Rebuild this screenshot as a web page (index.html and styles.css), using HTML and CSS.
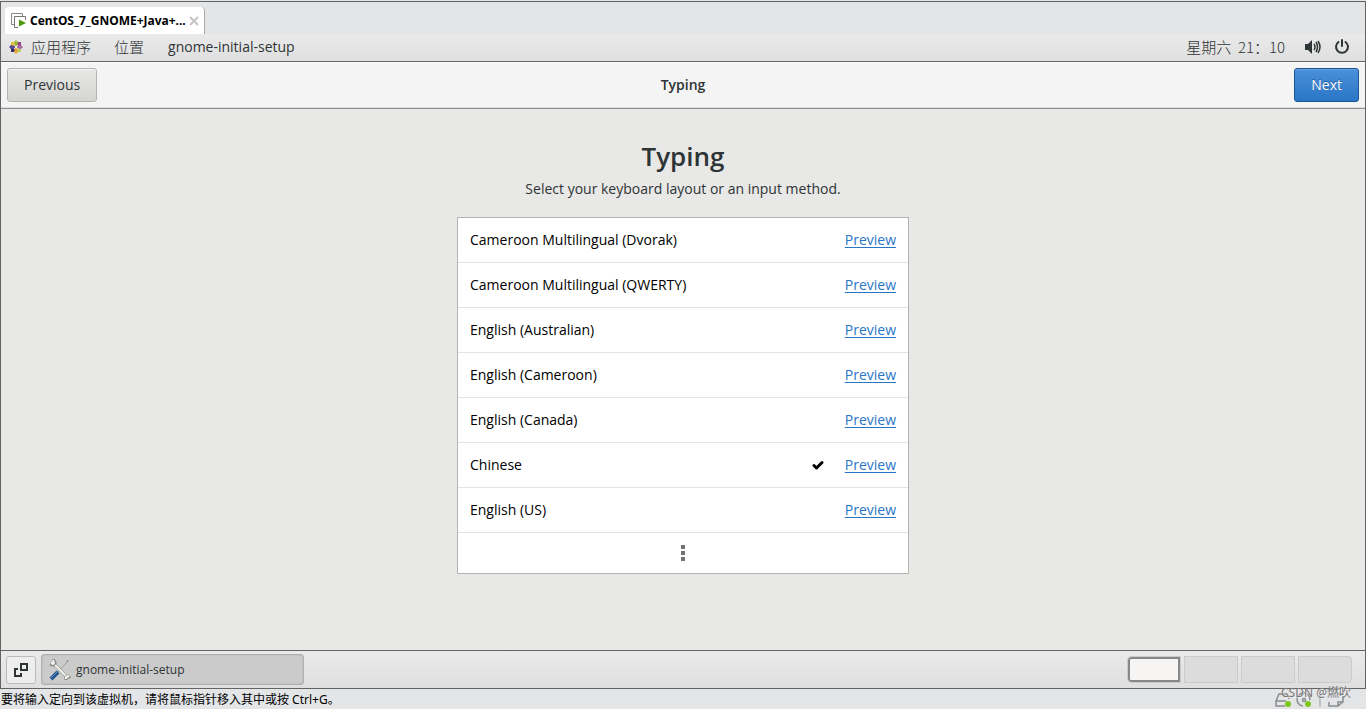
FILE: index.html
```
<!DOCTYPE html>
<html lang="en">
<head>
<meta charset="utf-8">
<title>Typing</title>
<link rel="stylesheet" href="styles.css">
</head>
<body>
<div class="screen">
  <div class="tabs">
    <div class="tab">
      <svg class="tab-icon" width="16" height="16" viewBox="0 0 16 16" fill="none"><path d="M11.500 3V.5H.5v11H3" stroke="#888"/><path d="M14.500 7V3.500H3.500v11H7" stroke="#777"/><path d="M8 6.500v7l7-3.500z" fill="#4a9a0c"/></svg>
      <span class="tab-title">CentOS_7_GNOME+Java+...</span>
      <button class="tab-close" aria-label="Close tab"><svg width="10" height="10" viewBox="0 0 10 10"><path d="M1 1l8 8M9 1L1 9" stroke="#c4c4c4" stroke-width="2"/></svg></button>
    </div>
  </div>
  <nav class="panel">
    <button class="menu menu-apps"><svg width="14" height="14" viewBox="0 0 14 14">
      <path d="M7 0l2 2v4H5V2z" fill="#9dbb3b"/><path d="M14 7l-2 2H8V5h4z" fill="#a66ba0"/><path d="M7 14l-2-2V8h4v4z" fill="#e8a33a"/><path d="M0 7l2-2h4v4H2z" fill="#5a4a91"/>
      <path d="M2 2h3l1 4-4-1z" fill="#e5c33c"/><path d="M12 2v3l-4 1 1-4z" fill="#963f87"/><path d="M12 12H9L8 8l4 1z" fill="#b9cd62"/><path d="M2 12V9l4-1-1 4z" fill="#393169"/><path d="M5 5l4 4M9 5L5 9" stroke="#f5f1ee"/></svg>应用程序</button>
    <button class="menu menu-places">位置</button>
    <button class="menu">gnome-initial-setup</button>
    <div class="tray">
      <span class="clock">星期六&nbsp; 21：10</span>
      <button class="tray-button" aria-label="Volume"><svg width="16" height="16" viewBox="0 0 16 16"><path d="M0 5h3l4-4v14l-4-4H0z" fill="#2e3436"/><path d="M9 5q2 3 0 6M11 3q3 5 0 10M13 2q4 6 0 12" fill="none" stroke="#2e3436" stroke-width="1.500"/></svg></button>
      <button class="tray-button" aria-label="Power"><svg width="16" height="16" viewBox="0 0 16 16" fill="none" stroke="#2e3436" stroke-width="2" stroke-linecap="round"><path d="M4.500 3a6 6 0 1 0 7 0M8 1v6"/></svg></button>
    </div>
  </nav>
  <header class="header">
    <button class="button">Previous</button>
    <div class="header-title">Typing</div>
    <button class="button button-next">Next</button>
  </header>
  <main class="content">
    <h1 class="title">Typing</h1>
    <p class="subtitle">Select your keyboard layout or an input method.</p>
    <ul class="list">
      <li class="row"><span class="name">Cameroon Multilingual (Dvorak)</span><a class="preview" href="#">Preview</a></li>
      <li class="row"><span class="name">Cameroon Multilingual (QWERTY)</span><a class="preview" href="#">Preview</a></li>
      <li class="row"><span class="name">English (Australian)</span><a class="preview" href="#">Preview</a></li>
      <li class="row"><span class="name">English (Cameroon)</span><a class="preview" href="#">Preview</a></li>
      <li class="row"><span class="name">English (Canada)</span><a class="preview" href="#">Preview</a></li>
      <li class="row"><span class="name">Chinese</span><svg width="12" height="10" viewBox="0 0 12 10"><path d="M2 5.500l2.500 2.500 5.500-5.500" fill="none" stroke="#000" stroke-width="3" stroke-linejoin="round" stroke-linecap="round"/></svg><a class="preview" href="#">Preview</a></li>
      <li class="row"><span class="name">English (US)</span><a class="preview" href="#">Preview</a></li>
      <li><button class="more" aria-label="More"><svg width="4" height="16" viewBox="0 0 4 16" fill="#727272"><path d="M0 0h4v4H0zM0 6h4v4H0zM0 12h4v4H0z"/></svg></button></li>
    </ul>
  </main>
  <footer class="taskbar">
    <button class="desktop" aria-label="Show desktop"><svg width="14" height="14" viewBox="0 0 14 14" fill="none" stroke="#2e3436" stroke-width="2"><path d="M7 1h6v6H7zM4 6H1v7h6v-3"/></svg></button>
    <button class="task"><svg width="22" height="22" viewBox="0 0 22 22" fill="none"><path d="M19 2L9 13" stroke="#9a9c99"/><path d="M18 3l1-2" stroke="#777"/><path d="M9 13l-7 7" stroke="#26568f" stroke-width="4"/><path d="M9 12l-7 7" stroke="#5c8fc9"/><path d="M5 5l13 13" stroke="#858783" stroke-width="3"/><path d="M5 5l13 13" stroke="#f5f5f2" stroke-width="2"/><path d="M4 0l2 4-2 2-3-1M17 21v-3l2-1 2 2" stroke="#858783" stroke-width="3"/><path d="M4 1l1 3-1 1-2-1M17 20v-2l2-1 1 1" stroke="#f2f2ef" stroke-width="2"/></svg><span>gnome-initial-setup</span></button>
    <div class="workspaces">
      <button class="workspace workspace-active" aria-label="Workspace 1"></button>
      <button class="workspace" aria-label="Workspace 2"></button>
      <button class="workspace" aria-label="Workspace 3"></button>
      <button class="workspace" aria-label="Workspace 4"></button>
    </div>
  </footer>
</div>
<div class="status">
  <span>要将输入定向到该虚拟机，请将鼠标指针移入其中或按 Ctrl+G。</span>
  <div class="devices">
    <svg width="70" height="16" viewBox="0 0 70 16" fill="none" stroke="#8b8d90" stroke-width="1.500"><path d="M14 7l-2-5H4L1 9v5h9M1 9h10"/><path d="M28 14a6.500 6.500 0 1 1 7-6"/><circle cx="29" cy="8" r="1.500"/><path d="M45 1v14" stroke="#b1b3b6"/><path d="M54 2h14v8l-5 4h-9v-4M68 10h-5v4"/><g fill="#7dc71d" stroke="none"><circle cx="13" cy="12" r="3"/><circle cx="33" cy="12" r="3"/></g></svg>
    <span class="watermark">CSDN @燃吹</span>
  </div>
</div>
</body>
</html>
```
FILE: styles.css
```
* { box-sizing: border-box; }
body {
  margin: 0;
  min-height: 100vh;
  display: flex;
  flex-direction: column;
  padding-top: 1px;
  background: #e3e5e7;
  color: #2e3436;
  font: 14px/20px "Open Sans", "Noto Sans CJK SC", sans-serif;
}
button {
  margin: 0;
  padding: 0;
  border: 0;
  background: none;
  color: inherit;
  font: inherit;
}
svg { display: block; flex: none; }
.screen {
  flex: 1;
  display: flex;
  flex-direction: column;
  border: 1px solid #636363;
}
.tabs {
  height: 32px;
  padding: 5px 0 0 4px;
  display: flex;
}
.tab {
  display: flex;
  align-items: center;
  padding: 0 5px 0 6px;
  background: #fff;
  border-right: 1px solid #aaa;
  border-radius: 4px 4px 0 0;
}
.tab-title {
  width: 162px;
  padding-left: 3px;
  color: #000;
  font: bold 12px/16px "Noto Sans", sans-serif;
  white-space: nowrap;
}
.panel {
  height: 28px;
  padding: 0 15px 2px 8px;
  display: flex;
  align-items: center;
  gap: 24px;
  background: linear-gradient(#eaeaea, #dfdfdf);
  border-bottom: 1px solid #636363;
}
.menu { display: flex; align-items: center; }
.menu-apps { gap: 8px; }
.menu-apps, .menu-places, .clock {
  font-family: "Noto Sans CJK SC", sans-serif;
  font-size: 15px;
  font-weight: 300;
}
.menu-apps { margin-right: -1px; }
.tray {
  margin-left: auto;
  display: flex;
  align-items: center;
  gap: 13px;
}
.clock { margin-right: 7px; }
.header {
  height: 47px;
  padding: 0 6px;
  display: grid;
  grid-template-columns: 1fr auto 1fr;
  align-items: center;
  background: #f4f4f4;
  border-bottom: 1px solid #8f8f8d;
  box-shadow: inset 0 1px #fff, inset 0 -1px #dedede;
}
.header-title { font-weight: 600; }
.button {
  justify-self: start;
  height: 34px;
  padding: 0 16px;
  border: 1px solid #b3b3b0;
  border-radius: 3px;
  background: linear-gradient(#e7e7e5, #d5d5d2);
  box-shadow: inset 0 1px #f5f5f4;
}
.button-next {
  justify-self: end;
  border-color: #1c5594;
  background: linear-gradient(#4a90d9, #2a76c6);
  box-shadow: inset 0 1px #68a3df;
  color: #fff;
  text-shadow: 0 -1px #1c5594;
}
.content {
  flex: 1;
  padding: 30px 16px 16px;
  display: flex;
  flex-direction: column;
  align-items: center;
  background: #e8e8e6;
}
.title {
  margin: 0;
  font-size: 26px;
  line-height: 34px;
  font-weight: 600;
}
.subtitle { margin: 6px 0 18px; }
.list {
  width: 100%;
  max-width: 452px;
  margin: 0;
  padding: 0;
  list-style: none;
  background: #fff;
  border: 1px solid #b3b3b0;
}
.row {
  height: 45px;
  padding: 0 12px;
  display: flex;
  align-items: center;
  gap: 21px;
  border-bottom: 1px solid #e4e4e2;
  color: #000;
}
.name { flex: 1; }
.preview {
  color: #2a76c6;
  text-underline-offset: 2px;
  text-decoration-thickness: 1px;
  text-decoration-skip-ink: none;
}
.more {
  width: 100%;
  height: 40px;
  display: flex;
  align-items: center;
  justify-content: center;
}
.taskbar {
  height: 38px;
  padding: 0 13px 0 5px;
  display: flex;
  align-items: center;
  gap: 5px;
  border-top: 1px solid #636363;
  background: linear-gradient(#eaeaea, #dfdfdf);
}
.desktop {
  width: 30px;
  height: 28px;
  display: flex;
  align-items: center;
  justify-content: center;
  border: 1px solid #bbb;
  border-radius: 3px;
  background: #eee;
}
.task {
  width: 263px;
  height: 31px;
  padding: 0 7px;
  display: flex;
  align-items: center;
  gap: 5px;
  border: 1px solid #b0b0b0;
  border-radius: 3px;
  background: #cbcbcb;
  box-shadow: inset 0 0 2px #aaa;
  font-size: 12px;
}
.workspaces {
  margin-left: auto;
  display: flex;
  gap: 3px;
}
.workspace {
  width: 54px;
  height: 27px;
  border: 1px solid #cbcbcb;
  background: #dcdcdc;
}
.workspace:first-child { border-radius: 4px 0 0 4px; }
.workspace:last-child { border-radius: 0 4px 4px 0; }
.workspace-active {
  border-color: #cbcbcb;
  background: #f6f5f4;
  box-shadow: inset 0 0 0 2px #888;
}
.status {
  height: 20px;
  padding: 2px 15px 0 1px;
  display: flex;
  align-items: center;
  justify-content: space-between;
  color: #000;
  font: 12px/18px "Noto Sans", "Noto Sans CJK SC", sans-serif;
}
.devices {
  position: relative;
  padding-right: 6px;
}
.watermark {
  position: absolute;
  right: 0;
  top: -7px;
  color: #777;
  font-size: 12px;
  line-height: 16px;
  text-shadow: 1px 1px #eee;
  white-space: nowrap;
}
```
